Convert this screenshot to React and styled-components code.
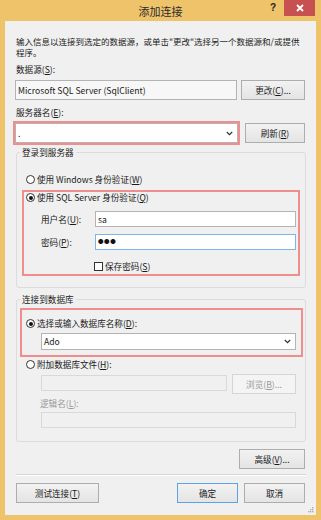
import React from 'react';
import styled, { createGlobalStyle } from 'styled-components';

const GlobalStyle = createGlobalStyle`
	html, body {
		margin: 0;
		padding: 0;
	}
	body {
		width: 321px;
		height: 520px;
		overflow: hidden;
		font-family: "Noto Sans CJK SC", "Noto Sans", sans-serif;
		font-size: 8.6px;
		line-height: 11px;
		color: #1a1a1a;
	}
`;

const Window = styled.div`
	width: 321px;
	height: 520px;
	box-sizing: border-box;
	background: #efc36a;
	display: flex;
	flex-direction: column;
	padding: 0 5px 5px;
`;

const TitleBar = styled.div`
	height: 21px;
	flex: none;
	display: flex;
	align-items: flex-start;
`;

const Title = styled.div`
	flex: 1;
	text-align: center;
	margin-left: 54px;
	font-size: 11px;
	line-height: 11px;
	padding-top: 6px;
	color: #2a2a2a;
	white-space: nowrap;
`;

const HelpButton = styled.div`
	width: 22px;
	height: 15px;
	flex: none;
	display: flex;
	align-items: center;
	justify-content: center;
	font-family: "Liberation Sans", sans-serif;
	font-weight: 700;
	font-size: 10px;
	color: #222;
`;

const CloseButton = styled.div`
	width: 31px;
	height: 16px;
	flex: none;
	margin-right: 1px;
	background: #c75050;
	display: flex;
	align-items: center;
	justify-content: center;
`;

const Client = styled.div`
	flex: 1;
	position: relative;
	background: #f0f0f0;
	display: flex;
	flex-direction: column;
	padding: 15px 11px 0 10px;
`;

const Intro = styled.div`
	margin-left: 1px;
	font-size: 8.5px;
	white-space: nowrap;
`;

const Label = styled.div`
	margin-top: ${(p) => p.$mt || 0}px;
	margin-left: ${(p) => (p.$ml === undefined ? 1 : p.$ml)}px;
	height: 11px;
	white-space: nowrap;
	color: ${(p) => (p.$disabled ? '#9a9a9a' : 'inherit')};
`;

const Row = styled.div`
	display: flex;
	align-items: ${(p) => p.$align || 'center'};
	gap: ${(p) => p.$gap || 0}px;
	margin: ${(p) => p.$mt || 0}px ${(p) => p.$mr || 0}px 0 ${(p) => p.$ml || 0}px;
	justify-content: ${(p) => p.$justify || 'flex-start'};
`;

const Field = styled.div`
	flex: 1;
	height: ${(p) => p.$h || 20}px;
	box-sizing: border-box;
	display: flex;
	align-items: center;
	padding: 0 4px 0 2px;
	margin-top: ${(p) => p.$mt || 0}px;
	background: ${(p) => (p.$disabled ? '#f0f0f0' : p.$readOnly ? '#f7f7f7' : '#fff')};
	border: 1px solid ${(p) => (p.$focus ? '#7eb4ea' : p.$disabled ? '#d9d9d9' : '#b4b4b4')};
	outline: ${(p) => (p.$marked ? '2px solid #f08e8e' : 'none')};
	white-space: nowrap;
`;

const FieldText = styled.span`
	flex: 1;
`;

const Dots = styled.span`
	font-size: 5.5px;
	letter-spacing: 0.6px;
	color: #111;
`;

const Button = styled.div`
	width: ${(p) => p.$w}px;
	height: 20px;
	flex: none;
	box-sizing: border-box;
	display: flex;
	align-items: center;
	justify-content: center;
	border: 1px solid ${(p) => (p.$primary ? '#5ea2e6' : p.$disabled ? '#d5d5d5' : '#adadad')};
	background: ${(p) => (p.$disabled ? '#f4f4f4' : 'linear-gradient(#f2f2f2, #e4e4e4)')};
	color: ${(p) => (p.$disabled ? '#9a9a9a' : 'inherit')};
	white-space: nowrap;
`;

const Group = styled.fieldset`
	margin: ${(p) => p.$mt || 0}px -1px 0 1px;
	padding: 0 5px ${(p) => p.$pb || 0}px;
	border: 1px solid #dcdcdc;
	border-radius: 3px;
	min-width: 0;
	display: flex;
	flex-direction: column;
`;

const Legend = styled.legend`
	padding: 0 2px;
	margin-left: -2px;
	height: 11px;
	line-height: 11px;
`;

const Marked = styled.div`
	border: 2px solid #f08e8e;
	margin: ${(p) => p.$mt || 0}px ${(p) => p.$mr || 0}px 0 ${(p) => p.$ml || 0}px;
	padding: ${(p) => p.$pad};
	display: flex;
	flex-direction: column;
`;

const Option = styled.div`
	display: flex;
	align-items: center;
	height: 11px;
	margin: ${(p) => p.$mt || 0}px 0 0 ${(p) => p.$ml || 0}px;
	white-space: nowrap;
`;

const RadioDot = styled.span`
	width: 9px;
	height: 9px;
	box-sizing: border-box;
	border-radius: 50%;
	border: 1px solid #333;
	background: #fff;
	margin-right: 2px;
	display: flex;
	align-items: center;
	justify-content: center;
	&::after {
		content: '';
		width: 4px;
		height: 4px;
		border-radius: 50%;
		background: ${(p) => (p.$on ? '#111' : 'transparent')};
	}
`;

const CheckBox = styled.span`
	width: 9px;
	height: 9px;
	box-sizing: border-box;
	border: 1px solid #333;
	background: #fff;
	margin-right: 2px;
`;

const FieldLabel = styled.div`
	width: 54px;
	flex: none;
`;

const Separator = styled.div`
	height: 1px;
	background: #d5d5d5;
	margin: 5px -1px 0 1px;
	border-bottom: 1px solid #fff;
`;

const Grip = styled.svg`
	position: absolute;
	right: 2px;
	bottom: 2px;
`;

const Chevron = () => (
	<svg width="7" height="5" viewBox="0 0 7 5">
		<polyline points="0.8,1 3.5,3.6 6.2,1" fill="none" stroke="#333" strokeWidth="1.2" />
	</svg>
);

const Key = ({ k }) => (
	<>
		(<u>{k}</u>)
	</>
);

const App = () => (
	<>
		<GlobalStyle />
		<Window>
			<TitleBar>
				<Title>添加连接</Title>
				<HelpButton>?</HelpButton>
				<CloseButton>
					<svg width="8" height="8" viewBox="0 0 8 8">
						<path d="M1 1L7 7M7 1L1 7" stroke="#fff" strokeWidth="1.8" />
					</svg>
				</CloseButton>
			</TitleBar>
			<Client>
				<Intro>
					输入信息以连接到选定的数据源，或单击"更改"选择另一个数据源和/或提供
					<br />
					程序。
				</Intro>
				<Label $mt={6}>
					数据源<Key k="S" />:
				</Label>
				<Row $mt={5} $gap={4}>
					<Field $readOnly>
						<FieldText>Microsoft SQL Server (SqlClient)</FieldText>
					</Field>
					<Button $w={64}>
						更改<Key k="C" />...
					</Button>
				</Row>
				<Label $mt={7}>
					服务器名<Key k="E" />:
				</Label>
				<Row $mt={5} $gap={7}>
					<Field $marked>
						<FieldText>.</FieldText>
						<Chevron />
					</Field>
					<Button $w={60}>
						刷新<Key k="R" />
					</Button>
				</Row>
				<Group $mt={4} $pb={11}>
					<Legend>登录到服务器</Legend>
					<Option $mt={16} $ml={4}>
						<RadioDot />
						使用 Windows 身份验证<Key k="W" />
					</Option>
					<Marked $mt={5} $pad="0 2px 2px 2px">
						<Option $ml={0}>
							<RadioDot $on />
							使用 SQL Server 身份验证<Key k="Q" />
						</Option>
						<Row $mt={8} $ml={15}>
							<FieldLabel>
								用户名<Key k="U" />:
							</FieldLabel>
							<Field $h={16}>
								<FieldText>sa</FieldText>
							</Field>
						</Row>
						<Row $mt={7} $ml={15}>
							<FieldLabel>
								密码<Key k="P" />:
							</FieldLabel>
							<Field $h={16} $focus>
								<Dots>●●●</Dots>
							</Field>
						</Row>
						<Option $mt={11} $ml={68}>
							<CheckBox />
							保存密码<Key k="S" />
						</Option>
					</Marked>
				</Group>
				<Group $mt={6} $pb={13}>
					<Legend>连接到数据库</Legend>
					<Marked $mt={3} $ml={-2} $mr={-3} $pad="8px 5px 5px 4px">
						<Option>
							<RadioDot $on />
							选择或输入数据库名称<Key k="D" />:
						</Option>
						<Row $mt={4} $ml={15}>
							<Field $h={17}>
								<FieldText>Ado</FieldText>
								<Chevron />
							</Field>
						</Row>
					</Marked>
					<Option $mt={2} $ml={4}>
						<RadioDot />
						附加数据库文件<Key k="H" />:
					</Option>
					<Row $mt={4} $ml={19} $mr={4} $gap={5} $align="flex-start">
						<Field $h={16} $mt={1} $disabled />
						<Button $w={64} $disabled>
							浏览<Key k="B" />...
						</Button>
					</Row>
					<Label $mt={4} $ml={18} $disabled>
						逻辑名<Key k="L" />:
					</Label>
					<Row $mt={3} $ml={19} $mr={4}>
						<Field $h={16} $disabled />
					</Row>
				</Group>
				<Row $mt={7} $justify="flex-end">
					<Button $w={66}>
						高级<Key k="V" />...
					</Button>
				</Row>
				<Separator />
				<Row $mt={7} $gap={6} $ml={1}>
					<Button $w={83}>
						测试连接<Key k="T" />
					</Button>
					<Row $ml={72} $gap={6}>
						<Button $w={61} $primary>
							确定
						</Button>
						<Button $w={61}>取消</Button>
					</Row>
				</Row>
				<Grip width="7" height="7" viewBox="0 0 7 7">
					<g fill="#a8a8a8">
						<rect x="5" y="1" width="1.3" height="1.3" />
						<rect x="3" y="3" width="1.3" height="1.3" />
						<rect x="5" y="3" width="1.3" height="1.3" />
						<rect x="1" y="5" width="1.3" height="1.3" />
						<rect x="3" y="5" width="1.3" height="1.3" />
						<rect x="5" y="5" width="1.3" height="1.3" />
					</g>
				</Grip>
			</Client>
		</Window>
	</>
);

export default App;
